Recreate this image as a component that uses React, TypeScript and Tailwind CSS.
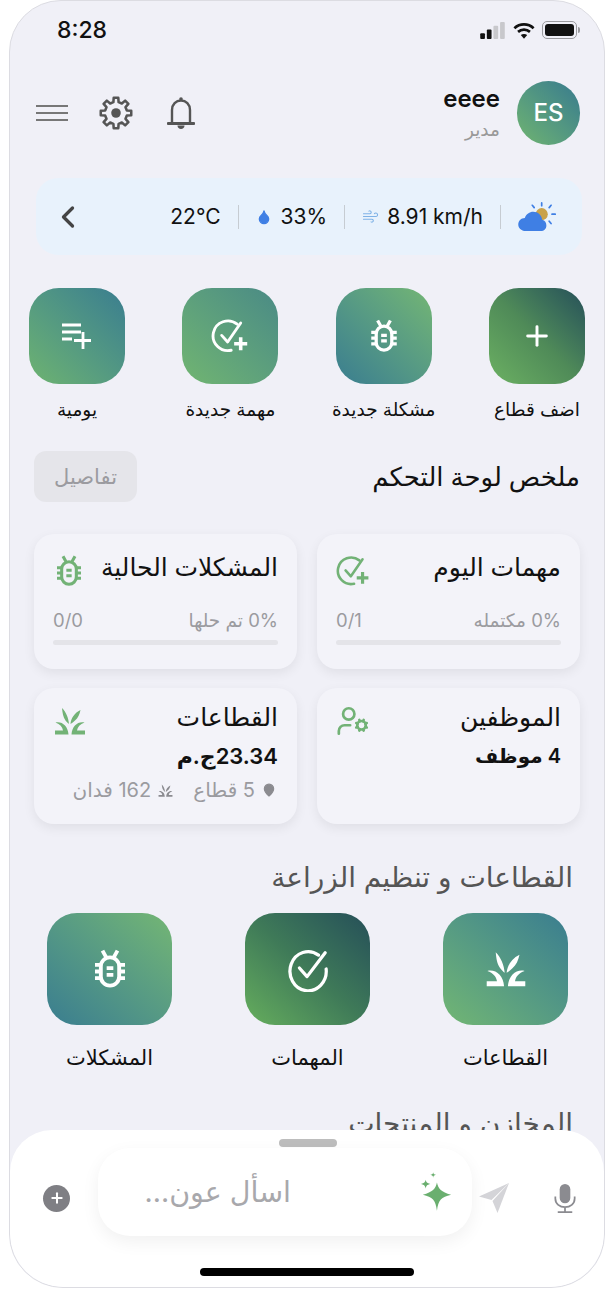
import { ChevronLeft, Plus, MapPin, Droplet, Wind, UserCog } from "lucide-react";
import type { ReactNode } from "react";

const font = "font-['Inter','Noto_Sans','DejaVu_Sans',sans-serif]";

function BugIcon({ className = "" }: { className?: string }) {
  return (
    <svg viewBox="0 0 24 24" className={className} fill="none" stroke="currentColor" strokeWidth="2.300" strokeLinecap="butt">
      <rect x="6.500" y="5" width="11" height="17" rx="5.500" />
      <path d="M7.500 1 10 5.500M16.500 1 14 5.500M3 9.500H7M3 13.500H7M3 17.500H7M17 9.500h4M17 13.500h4M17 17.500h4M10 11.500h4M10 15.500h4" />
    </svg>
  );
}

function CheckPlusIcon({ className = "" }: { className?: string }) {
  return (
    <svg viewBox="0 0 32 32" className={className} fill="none" stroke="currentColor" strokeWidth="2.400" strokeLinecap="round" strokeLinejoin="round">
      <path d="M22 6A12.500 12.500 0 1 0 17 28" />
      <path d="M9 15.500l5 5.500L25 5" />
      <path d="M25 17v11M19.500 22.500h11" strokeWidth="3" strokeLinecap="butt" />
    </svg>
  );
}

function GrassIcon({ className = "" }: { className?: string }) {
  return (
    <svg viewBox="0 0 32 28" className={className} fill="currentColor">
      <path d="M1 27.500v-4h8C8.500 20 6 17 1.500 15.500 8 14 14 19 14.500 27.500z" />
      <path d="M31 27.500v-4h-8c.5-3.500 3-6.500 7.500-8C24 14 18 19 17.500 27.500z" />
      <path d="M15 17C14.500 11 12 5 8 1c.5 5 1 9 3.500 12.500 1 1.500 2.500 2.700 3.500 3.500z" />
      <path d="M16.500 17c.5-6 4-11 10-14-1 4.500-2.500 8-5.500 10.500-1.500 1.500-3 2.700-4.500 3.500z" />
    </svg>
  );
}

function CircleCheckIcon({ className = "" }: { className?: string }) {
  return (
    <svg viewBox="0 0 44 48" className={className} fill="none" stroke="currentColor" strokeWidth="3.400" strokeLinecap="round" strokeLinejoin="round">
      <path d="M33 9.500A19 20.500 0 1 0 41 24" />
      <path d="M13 23l8 9L40 7" />
    </svg>
  );
}

function ListPlusIcon({ className = "" }: { className?: string }) {
  return (
    <svg viewBox="0 0 32 28" className={className} fill="none" stroke="currentColor" strokeWidth="2.800">
      <path d="M1 3h19M1 10h19M1 17h10M22 10v17M13 18.500h17" />
    </svg>
  );
}

function CloudSun({ className = "" }: { className?: string }) {
  return (
    <svg viewBox="0 0 40 32" className={className}>
      <circle cx="25" cy="13" r="6.500" fill="#c9a24a" />
      <path d="M25 1v3M35 3.500l-2 2.500M39.500 13h-3.500M35 23l-2-2.500M15 3.500l2 2.500" stroke="#3f7fe4" strokeWidth="1.800" strokeLinecap="round" />
      <path d="M8 31C3 31 0 27.500 0 24c0-4 3-7 7-7 1.500-4 5-6.500 9-6.500 5 0 9 3.500 9.500 8.500C28.500 19.500 30 22 30 25c0 3.500-2.500 6-6 6z" fill="#3f7fe4" />
    </svg>
  );
}

function Sparkle({ className = "" }: { className?: string }) {
  return (
    <svg viewBox="0 0 34 42" className={className} fill="currentColor">
      <path d="M18 11c1.500 7 4.500 10 15 13-10.500 2.500-13.500 5.500-15 17-1.500-11.500-4.500-14.500-15-17 10.500-3 13.500-6 15-13z" />
      <path d="M6 8c.4 2.500 1.500 3.500 5 4.500-3.500.8-4.600 2-5 5-.4-3-1.500-4.200-5-5 3.500-1 4.600-2 5-4.500z" />
      <path d="M14 0c.2 1.500.8 2.200 3 2.800-2.200.5-2.800 1.200-3 3-.2-1.800-.8-2.500-3-3 2.200-.6 2.800-1.300 3-2.800z" />
    </svg>
  );
}

function gearPath() {
  const teeth = 8;
  const pts: string[] = [];
  for (let i = 0; i < teeth; i++) {
    const a = (i / teeth) * Math.PI * 2 - Math.PI / 2;
    const step = (Math.PI * 2) / teeth;
    const list: [number, number][] = [
      [a - step * 0.3, 10.500],
      [a - step * 0.19, 14.500],
      [a + step * 0.19, 14.500],
      [a + step * 0.3, 10.500],
    ];
    for (const [ang, r] of list) pts.push(`${(16 + Math.cos(ang) * r).toFixed(2)} ${(16 + Math.sin(ang) * r).toFixed(2)}`);
  }
  return `M${pts.join("L")}Z`;
}

function GearIcon({ className = "" }: { className?: string }) {
  return (
    <svg viewBox="0 0 32 32" className={className}>
      <path d={gearPath()} fill="none" stroke="#555" strokeWidth="2.400" strokeLinejoin="round" />
      <circle cx="16" cy="16" r="4.500" fill="#555" />
    </svg>
  );
}

function BellIcon({ className = "" }: { className?: string }) {
  return (
    <svg viewBox="0 0 28 34" className={className} fill="none" stroke="#555" strokeWidth="2.400">
      <path d="M5 27V14C5 8.500 9 4.500 14 4.500S23 8.500 23 14v13" />
      <path d="M1 27.500h26" strokeLinecap="round" strokeWidth="2.800" />
      <circle cx="14" cy="3" r="1.800" fill="#555" stroke="none" />
      <path d="M10.500 29.500h7c0 2-1.500 3.500-3.500 3.500s-3.500-1.500-3.500-3.500z" fill="#555" stroke="none" />
    </svg>
  );
}

function PlaneIcon({ className = "" }: { className?: string }) {
  return (
    <svg viewBox="0 0 30 30" className={className} fill="#d4d4d8">
      <path d="M30 0 0 13.500l12.500 3.500L30 0z" />
      <path d="M30 0 13.500 18 18.500 30 30 0z" />
    </svg>
  );
}

function MicIcon({ className = "" }: { className?: string }) {
  return (
    <svg viewBox="0 0 22 30" className={className} fill="none" stroke="#8b8b90" strokeWidth="1.800">
      <rect x="5.500" y="0" width="11" height="20" rx="5.500" fill="#8b8b90" stroke="none" />
      <path d="M1 13v2c0 5.500 4.500 9 10 9s10-3.500 10-9v-2M11 24v5M3.500 29.100h15" />
    </svg>
  );
}

function ActionTile({ gradient, label, children }: { gradient: string; label: string; children: ReactNode }) {
  return (
    <div className="flex w-[96px] flex-col items-center">
      <div className={`flex h-[96px] w-[96px] items-center justify-center rounded-[30px] text-white ${gradient}`}>{children}</div>
      <span className="mt-[12px] whitespace-nowrap text-[18.500px] leading-[26px] text-[#111]">{label}</span>
    </div>
  );
}

function BigTile({ gradient, label, children }: { gradient: string; label: string; children: ReactNode }) {
  return (
    <div className="flex w-[125px] flex-col items-center">
      <div className={`flex h-[112px] w-[125px] items-center justify-center rounded-[30px] text-white ${gradient}`}>{children}</div>
      <span className="mt-[20px] whitespace-nowrap text-[21px] leading-[26px] text-[#111]">{label}</span>
    </div>
  );
}

function ProgressCard({ title, label, count, icon }: { title: string; label: string; count: string; icon: ReactNode }) {
  return (
    <div className="h-[135px] rounded-[20px] bg-[#f3f3f9] px-[19px] pt-[15px] shadow-[0_4px_12px_rgba(0,0,0,0.07)]">
      <div className="flex h-[36px] items-center justify-between">
        <span className="text-[25px] font-medium leading-[36px] text-[#111]">{title}</span>
        {icon}
      </div>
      <div className="mt-[24px] flex h-[24px] items-center justify-between text-[18.500px] text-[#9b9ba0]">
        <span>{label}</span>
        <span>{count}</span>
      </div>
      <div className="mt-[7px] h-[5px] rounded-full bg-[#e4e4e9]" />
    </div>
  );
}

export default function App() {
  return (
    <div dir="rtl" className={`min-h-[1303px] bg-white ${font}`}>
      <div className="relative mr-[2px] h-[1288px] w-[596px] overflow-hidden rounded-b-[54px] rounded-t-[52px] border border-[#dcdce2] bg-[#f0f0f7]">
        {/* Status bar */}
        <div dir="ltr" className="flex h-[60px] items-center justify-between pb-[2px] pl-[47px] pr-[24px]">
          <span className="text-[23px] font-medium leading-none text-[#111]">8:28</span>
          <div className="flex items-center gap-[7px]">
            <svg viewBox="0 0 28 18" className="h-[17px] w-[27px]">
              <rect x="1" y="12" width="5" height="6" rx="1" fill="#111" />
              <rect x="8" y="8" width="5" height="10" rx="1" fill="#111" />
              <rect x="15" y="4" width="5" height="14" rx="1" fill="#c8c8cc" />
              <rect x="22" y="0" width="5" height="18" rx="1" fill="#c8c8cc" />
            </svg>
            <svg viewBox="0 0 24 18" className="h-[17px] w-[22px]" fill="none" stroke="#111" strokeWidth="3">
              <path d="M1.500 6.500c6-5.500 15-5.500 21 0M5.500 10.500c3.800-3.200 9.200-3.200 13 0" />
              <path d="M12 18l-3.500-4c2-1.500 5-1.500 7 0z" fill="#111" stroke="none" />
            </svg>
            <div className="flex items-center">
              <div className="h-[18px] w-[35px] rounded-[5px] border border-[#9a9a9e] p-[2px]">
                <div className="h-full w-full rounded-[3px] bg-[#111]" />
              </div>
              <div className="ml-[1px] h-[6px] w-[2px] rounded-r-full bg-[#9a9a9e]" />
            </div>
          </div>
        </div>

        {/* Header */}
        <div className="mr-[24px] ml-[26px] mt-[20px] flex h-[64px] items-center">
          <div className="flex h-[64px] w-[63px] items-center justify-center rounded-full bg-linear-to-tr from-[#70b46e] to-[#387a8d] text-[24px] font-medium text-white">ES</div>
          <div className="mr-[17px] flex flex-col items-start">
            <span dir="ltr" className="text-[24px] font-semibold leading-[32px] text-[#111]">eeee</span>
            <span className="text-[18.500px] leading-[28px] text-[#999]">مدير</span>
          </div>
          <div dir="ltr" className="mr-auto flex flex-row-reverse items-center">
            <BellIcon className="h-[34px] w-[28px]" />
            <GearIcon className="mr-[34px] h-[34px] w-[34px]" />
            <svg viewBox="0 0 32 18" className="mr-[31px] h-[18px] w-[32px]" fill="none" stroke="#777" strokeWidth="2">
              <path d="M0 2h32M0 9h32M0 16h32" />
            </svg>
          </div>
        </div>

        {/* Weather */}
        <div dir="ltr" className="ml-[26px] mr-[22px] mt-[33px] flex h-[77px] items-center rounded-[22px] bg-[#e8f2fc] pl-[14px] pr-[26px] text-[21px] text-[#111]">
          <ChevronLeft className="h-[36px] w-[36px] text-[#444]" strokeWidth={2.200} />
          <div className="ml-auto flex items-center">
            <span>22°C</span>
            <div className="mx-[17px] h-[24px] w-px bg-[#c6ccd2]" />
            <Droplet className="h-[16px] w-[16px] fill-[#3f7fe4] text-[#3f7fe4]" />
            <span className="ml-[9px]">33%</span>
            <div className="mx-[17px] h-[24px] w-px bg-[#c6ccd2]" />
            <Wind className="h-[17px] w-[17px] text-[#7fb2e6]" strokeWidth={1.500} />
            <span className="ml-[8px]">8.91 km/h</span>
            <div className="mx-[17px] h-[24px] w-px bg-[#c6ccd2]" />
            <CloudSun className="h-[30px] w-[38px]" />
          </div>
        </div>

        {/* Quick actions */}
        <div className="mx-[19px] mt-[33px] flex justify-between">
          <ActionTile label="اضف قطاع" gradient="bg-linear-to-tr from-[#6cb162] via-[#4f8a58] to-[#264f58]">
            <Plus className="h-[32px] w-[32px]" strokeWidth={2.200} />
          </ActionTile>
          <ActionTile label="مشكلة جديدة" gradient="bg-linear-to-bl from-[#74b673] to-[#3a7d8f]">
            <BugIcon className="h-[34px] w-[34px]" />
          </ActionTile>
          <ActionTile label="مهمة جديدة" gradient="bg-linear-to-tr from-[#71b570] to-[#4a8a85]">
            <CheckPlusIcon className="h-[38px] w-[38px]" />
          </ActionTile>
          <ActionTile label="يومية" gradient="bg-linear-to-tr from-[#6eb36f] to-[#3a7d8f]">
            <ListPlusIcon className="h-[28px] w-[32px]" />
          </ActionTile>
        </div>

        {/* Dashboard summary */}
        <div className="mx-[24px] mt-[29px] flex h-[51px] items-center justify-between">
          <span className="text-[26px] font-medium text-[#111]">ملخص لوحة التحكم</span>
          <div className="flex h-[51px] w-[103px] items-center justify-center rounded-[12px] bg-[#e5e5ea] text-[21px] text-[#9b9ba0]">تفاصيل</div>
        </div>

        <div className="mx-[24px] mt-[32px] grid grid-cols-2 gap-x-[20px] gap-y-[19px]">
          <ProgressCard title="مهمات اليوم" label="0% مكتمله" count="0/1" icon={<CheckPlusIcon className="mt-[8px] h-[34px] w-[34px] text-[#72b276]" />} />
          <ProgressCard title="المشكلات الحالية" label="0% تم حلها" count="0/0" icon={<BugIcon className="mt-[8px] h-[32px] w-[32px] text-[#72b276]" />} />
          <div className="h-[136px] rounded-[20px] bg-[#f3f3f9] px-[19px] pt-[14px] shadow-[0_4px_12px_rgba(0,0,0,0.07)]">
            <div className="flex h-[32px] items-center justify-between">
              <span className="text-[25px] font-medium text-[#111]">الموظفين</span>
              <UserCog className="mt-[6px] h-[34px] w-[34px] text-[#72b276]" strokeWidth={1.900} />
            </div>
            <div className="mt-[6px] text-[20px] font-semibold leading-[32px] text-[#111]">4 موظف</div>
          </div>
          <div className="h-[136px] rounded-[20px] bg-[#f3f3f9] px-[19px] pt-[14px] shadow-[0_4px_12px_rgba(0,0,0,0.07)]">
            <div className="flex h-[32px] items-center justify-between">
              <span className="text-[25px] font-medium text-[#111]">القطاعات</span>
              <GrassIcon className="mt-[6px] h-[28px] w-[34px] text-[#72b276]" />
            </div>
            <div className="mt-[6px] text-[22px] font-semibold leading-[32px] text-[#111]">23.34ج.م</div>
            <div className="mt-[3px] flex items-center pr-[2px] text-[20px] text-[#9b9ba0]">
              <MapPin className="ml-[7px] h-[14px] w-[14px] fill-[#8b8b90] text-[#8b8b90]" />
              <span>5 قطاع</span>
              <GrassIcon className="ml-[7px] mr-[20px] h-[13px] w-[15px] text-[#8b8b90]" />
              <span>162 فدان</span>
            </div>
          </div>
        </div>

        {/* Agriculture */}
        <div className="mr-[31px] mt-[35px] text-[28px] leading-[36px] text-[#555]">القطاعات و تنظيم الزراعة</div>
        <div className="ml-[37px] mr-[36px] mt-[18px] flex justify-between">
          <BigTile label="القطاعات" gradient="bg-linear-to-tr from-[#72b672] to-[#3a7d8f]">
            <GrassIcon className="h-[36px] w-[42px]" />
          </BigTile>
          <BigTile label="المهمات" gradient="bg-linear-to-tr from-[#66ae5c] via-[#3f7a58] to-[#264f58]">
            <CircleCheckIcon className="h-[46px] w-[42px]" />
          </BigTile>
          <BigTile label="المشكلات" gradient="bg-linear-to-bl from-[#74b673] to-[#3a7d8f]">
            <BugIcon className="h-[40px] w-[40px]" />
          </BigTile>
        </div>
        <div className="mr-[31px] mt-[34px] text-[28px] leading-[36px] text-[#555]">المخازن و المنتجات</div>

        {/* Bottom sheet */}
        <div className="absolute inset-x-0 bottom-0 h-[157px] rounded-b-[54px] rounded-t-[42px] bg-white">
          <div className="absolute left-[269px] top-[9px] h-[8px] w-[58px] rounded-full bg-[#bdbdbd]" />
          <div dir="ltr" className="flex h-[136px] items-center">
            <div className="ml-[33px] flex h-[27px] w-[27px] items-center justify-center rounded-full bg-[#7f7f84]">
              <Plus className="h-[16px] w-[16px] text-white" strokeWidth={3} />
            </div>
            <div dir="rtl" className="relative mb-[12px] ml-[28px] flex h-[88px] w-[374px] items-center rounded-[32px] bg-white pr-[20px] shadow-[0_6px_18px_rgba(0,0,0,0.06)]">
              <Sparkle className="ml-[129px] h-[40px] w-[32px] text-[#6aaf6f]" />
              <span className="text-[28.500px] text-[#a8a8ac]">اسأل عون...</span>
            </div>
            <PlaneIcon className="ml-[7px] h-[30px] w-[30px]" />
            <MicIcon className="ml-[45px] h-[29px] w-[22px]" />
          </div>
          <div className="absolute left-[190px] top-[138px] h-[8px] w-[214px] rounded-full bg-black" />
        </div>
      </div>
    </div>
  );
}
